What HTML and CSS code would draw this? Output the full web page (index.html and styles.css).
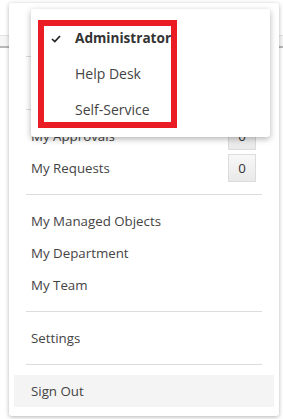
FILE: index.html
```html
<!DOCTYPE html>
<html lang="en">
<head>
  <meta charset="UTF-8">
  <meta name="viewport" content="width=device-width, initial-scale=1.0">
  <title>User Menu</title>
  <link rel="stylesheet" href="styles.css">
</head>
<body>
  <div class="page">
    <div class="topbar"></div>
    <div class="subbar"></div>
  </div>

  <div class="user-menu">
    <!-- rows under the role popup -->
    <div class="menu-item"></div>
    <div class="separator"></div>
    <div class="menu-item"></div>
    <div class="separator"></div>
    <div class="menu-item">
      <span>My Approvals</span>
      <span class="badge">0</span>
    </div>
    <div class="menu-item">
      <span>My Requests</span>
      <span class="badge">0</span>
    </div>
    <div class="separator"></div>
    <div class="menu-item">My Managed Objects</div>
    <div class="menu-item">My Department</div>
    <div class="menu-item">My Team</div>
    <div class="separator"></div>
    <div class="menu-item">Settings</div>
    <div class="separator"></div>
    <div class="menu-item active">Sign Out</div>
  </div>

  <div class="role-popup">
    <div class="roles">
      <div class="role selected">
        <svg class="check" width="10" height="8" viewBox="0 0 10 8">
          <path d="M1 4 L3.8 6.6 L9 1" fill="none" stroke="#222" stroke-width="1.7"/>
        </svg>
        Administrator
      </div>
      <div class="role">Help Desk</div>
      <div class="role">Self-Service</div>
    </div>
  </div>
</body>
</html>
```

FILE: styles.css
```css
body {
  margin: 0;
  padding: 0;
  font-family: "Open Sans", "Noto Sans", sans-serif;
  font-size: 13.3px;
  color: #444;
  background-color: #fff;
}
.page {
  height: 419px;
}
.topbar {
  height: 35px;
  border-bottom: 1px solid #e2e2e2;
}
.subbar {
  height: 10px;
  border-bottom: 2px solid #b8b8b8;
  background-color: #f6f6f6;
}

.user-menu {
  position: absolute;
  top: 3px;
  left: 9px;
  width: 260px;
  padding: 11px 5px 9px;
  background-color: white;
  border-radius: 3px;
  box-shadow: 0px 1px 4px rgba(0, 0, 0, 0.3);
}
.menu-item {
  display: flex;
  justify-content: space-between;
  align-items: center;
  height: 32px;
  padding: 0 18px 0 17px;
}
.menu-item.active {
  background-color: #f4f4f4;
}
.separator {
  height: 1px;
  margin: 10px 12px;
  background-color: #dcdcdc;
}
.badge {
  width: 26px;
  height: 26px;
  line-height: 26px;
  text-align: center;
  color: #333;
  border: 1px solid #dcdcdc;
  background: linear-gradient(#f8f8f8, #e9e9e9);
}

.role-popup {
  position: absolute;
  top: 9px;
  left: 31px;
  width: 239px;
  height: 128px;
  padding-top: 11px;
  padding-left: 7px;
  box-sizing: border-box;
  background-color: white;
  border-radius: 3px;
  box-shadow: 0px 2px 6px rgba(0, 0, 0, 0.3);
}
.roles {
  width: 139px;
  outline: 6px solid #ea1c24;
  outline-offset: -6px;
}
.role {
  position: relative;
  height: 36px;
  line-height: 36px;
  padding-left: 37px;
  color: #444;
  font-size: 14px;
}
.role.selected {
  font-weight: bold;
  color: #333;
  font-size: 13.6px;
}
.check {
  position: absolute;
  left: 13px;
  top: 15px;
}
```
